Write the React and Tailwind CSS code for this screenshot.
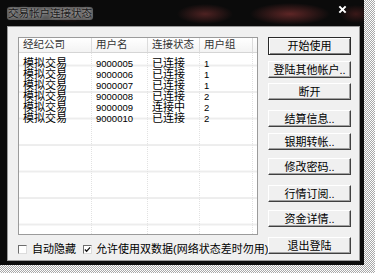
import React from "react";

const rows = [
  ["模拟交易", "9000005", "已连接", "1"],
  ["模拟交易", "9000006", "已连接", "1"],
  ["模拟交易", "9000007", "已连接", "1"],
  ["模拟交易", "9000008", "已连接", "2"],
  ["模拟交易", "9000009", "连接中", "2"],
  ["模拟交易", "9000010", "已连接", "2"],
];

const buttons = [
  { label: "开始使用", cls: "mt-0 h-[18px]", main: true },
  { label: "登陆其他帐户..", cls: "mt-[6px] h-[17px]" },
  { label: "断开", cls: "mt-[5px] h-[17px]" },
  { label: "结算信息..", cls: "mt-[10px] h-[17px]" },
  { label: "银期转帐..", cls: "mt-[6px] h-[17px]" },
  { label: "修改密码..", cls: "mt-[8px] h-[17px]" },
  { label: "行情订阅..", cls: "mt-[10px] h-[17px]" },
  { label: "资金详情..", cls: "mt-[8px] h-[17px]" },
  { label: "退出登陆", cls: "mt-[10px] h-[17px]" },
];

/* --------- Column of the list --------- */
function Col({ title, width, cells, mono }) {
  return (
    <div className={`${width} flex flex-col shrink-0`}>
      <div className="h-[15px] flex items-center pl-[4px] text-[10.5px] text-[#333] border-r border-[#dcdcdc] bg-gradient-to-b from-white to-[#f3f3f3] border-b border-b-[#d5d5d5]">
        {title}
      </div>
      <div className="flex-1 pt-[5px] pl-[4px] border-r border-dotted border-[#e2e2e2]">
        {cells.map((c, i) => (
          <div
            key={i}
            className={`h-[11px] leading-[11px] whitespace-nowrap ${
              mono ? "text-[9.5px]" : "text-[11px]"
            }`}
          >
            {c}
          </div>
        ))}
      </div>
    </div>
  );
}

function CheckBox({ checked }) {
  return (
    <div className="w-[9px] h-[9px] shrink-0 bg-white border border-t-[#6d6d6d] border-l-[#6d6d6d] border-r-[#dcdcdc] border-b-[#dcdcdc] flex items-center justify-center">
      {checked && (
        <svg viewBox="0 0 8 8" className="w-[7px] h-[7px]">
          <path d="M1 4 L3 6 L7 1.5" stroke="#111" strokeWidth="1.4" fill="none" />
        </svg>
      )}
    </div>
  );
}

export default function App() {
  return (
    <div
      className="w-[375px] h-[273px] overflow-hidden bg-[repeating-conic-gradient(#a8a8a8_0_25%,#ffffff_0_50%)] bg-[length:2px_2px] text-black"
      style={{ fontFamily: '"Liberation Sans", "Noto Sans CJK SC", sans-serif' }}
    >
      <div className="w-[364px] h-[265px] bg-[#0b0b0b] flex flex-col">
        {/* Title bar */}
        <div className="h-[26px] shrink-0 flex items-start justify-between pl-[7px] pr-[17px] bg-[radial-gradient(ellipse_28px_10px_at_205px_14px,#4e2222,transparent),radial-gradient(ellipse_40px_11px_at_290px_14px,#5e2626,transparent),radial-gradient(ellipse_22px_9px_at_70px_14px,#2e1616,transparent),radial-gradient(ellipse_16px_9px_at_356px_14px,#3a1818,transparent)]">
          <div className="mt-[7px] h-[13px] px-[1px] text-[10.5px] leading-[13px] text-[#1a1a1a] bg-[#7a7a7a]/70 rounded-[3px] [text-shadow:0_0_3px_#cfcfcf]">
            交易帐户连接状态
          </div>
          <svg viewBox="0 0 10 10" className="w-[9px] h-[9px] mt-[5px]">
            <path d="M1.5 1.5 L8.5 8.5 M8.5 1.5 L1.5 8.5" stroke="#fff" strokeWidth="2.2" />
          </svg>
        </div>

        {/* Client area */}
        <div className="flex-1 pl-[7px] pr-[4px] pb-[4px]">
          <div className="h-full bg-[#f0f0f0] border border-[#9a9a9a] flex pt-[10px] pl-[10px]">
            {/* Left: list + checkboxes */}
            <div className="w-[240px] flex flex-col">
              <div className="h-[198px] bg-white border border-[#9b9b9b] flex bg-[linear-gradient(to_bottom,transparent_25px,#ededed_25px,#ededed_26px)] bg-[length:100%_26.5px] bg-[position:0_2px]">
                <Col title="经纪公司" width="w-[73px]" cells={rows.map((r) => r[0])} />
                <Col title="用户名" width="w-[56px]" cells={rows.map((r) => r[1])} mono />
                <Col title="连接状态" width="w-[52px]" cells={rows.map((r) => r[2])} />
                <Col title="用户组" width="w-[53px]" cells={rows.map((r) => r[3])} mono />
                <div className="flex-1 flex flex-col">
                  <div className="h-[15px] bg-gradient-to-b from-white to-[#f3f3f3] border-b border-[#d5d5d5]" />
                </div>
              </div>
              <div className="mt-[8px] flex items-center text-[11px] leading-[12px] whitespace-nowrap">
                <CheckBox />
                <span className="ml-[5px] shrink-0">自动隐藏</span>
                <div className="ml-[7px] shrink-0">
                  <CheckBox checked />
                </div>
                <span className="ml-[4px] shrink-0">允许使用双数据(网络状态差时勿用)</span>
              </div>
            </div>

            {/* Right: buttons */}
            <div className="ml-[10px] w-[83px] flex flex-col">
              {buttons.map((b) => (
                <button
                  key={b.label}
                  className={`${b.cls} w-full flex items-center justify-center text-[11px] leading-[12px] bg-[#f0f0f0] ${
                    b.main
                      ? "border border-[#2a2a2a] shadow-[inset_1px_1px_0_#fff,inset_-1px_-1px_0_#808080]"
                      : "border border-t-white border-l-white border-r-[#404040] border-b-[#404040] shadow-[inset_-1px_-1px_0_#a0a0a0]"
                  }`}
                >
                  {b.label}
                </button>
              ))}
            </div>
          </div>
        </div>
      </div>
    </div>
  );
}
